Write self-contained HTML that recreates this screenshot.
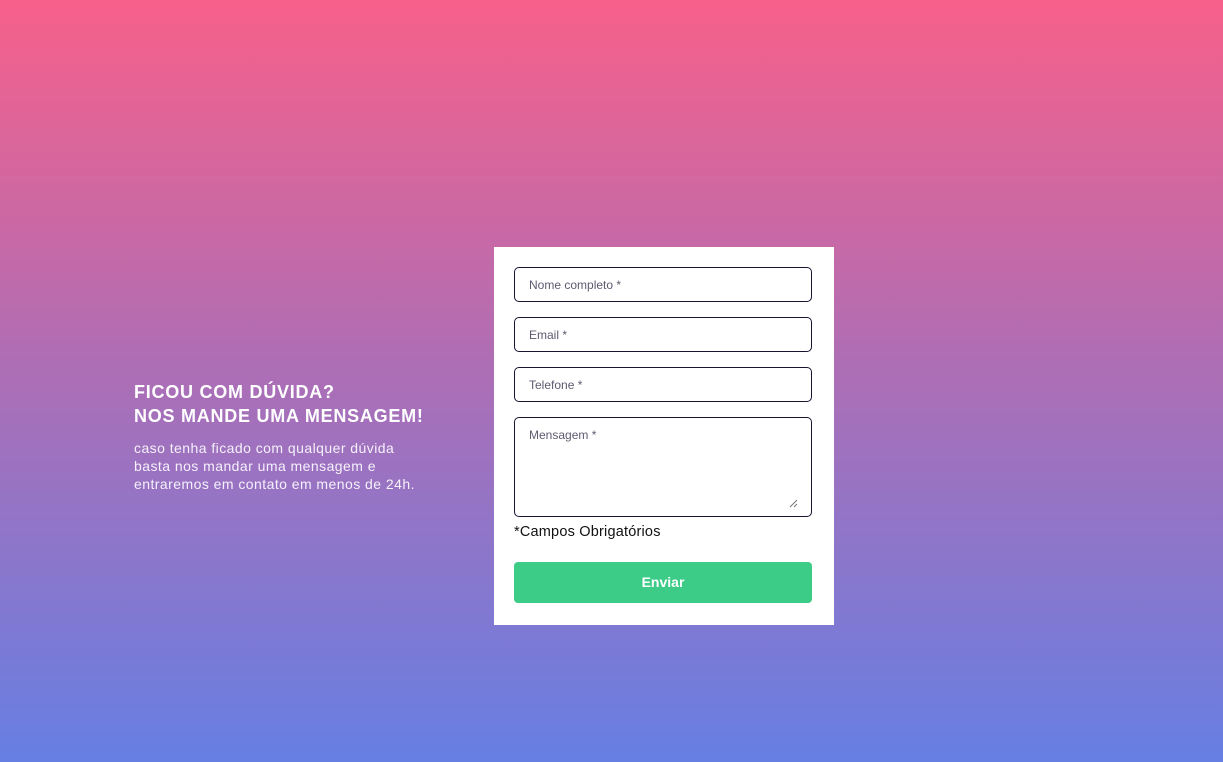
<!DOCTYPE html>
<html><head><meta charset="utf-8"><style>
*{margin:0;padding:0;box-sizing:border-box}
body{width:1223px;height:762px;overflow:hidden;background:linear-gradient(to bottom,#f7608a 0%,#b26db2 45%,#667fe3 100%);font-family:"Liberation Sans",sans-serif;position:relative}
.left{position:absolute;left:134px;top:380px;color:#fff}
.left h2{font-size:18px;font-weight:bold;line-height:24px;letter-spacing:0.75px}
.left p{font-size:14px;line-height:18px;margin-top:11px;color:#f5f0fa;letter-spacing:0.45px}
.card{position:absolute;left:494px;top:247px;width:340px;height:378px;background:#fff}
.in{position:absolute;left:20px;width:298px;height:35px;border:1.5px solid #1a1330;border-radius:5px;font-size:12px;color:#5d5a70;padding:10px 14px}
.req{position:absolute;left:20px;top:277px;font-size:14.5px;color:#111;letter-spacing:0.2px}
.btn{position:absolute;left:20px;top:315px;width:298px;height:41px;background:#3ccc88;border-radius:4px;color:#fff;font-weight:bold;font-size:14px;text-align:center;line-height:41px}
</style></head><body>
<div class="left"><h2>FICOU COM DÚVIDA?<br>NOS MANDE UMA MENSAGEM!</h2>
<p>caso tenha ficado com qualquer dúvida<br>basta nos mandar uma mensagem e<br>entraremos em contato em menos de 24h.</p></div>
<div class="card">
<div class="in" style="top:20px">Nome completo *</div>
<div class="in" style="top:70px">Email *</div>
<div class="in" style="top:120px">Telefone *</div>
<div class="in" style="top:170px;height:100px">Mensagem *
<svg style="position:absolute;right:13px;bottom:8px" width="9" height="9"><path d="M1 8L8 1M5 8L8 5" stroke="#777" stroke-width="1"/></svg></div>
<div class="req">*Campos Obrigatórios</div>
<div class="btn">Enviar</div>
</div>
</body></html>
